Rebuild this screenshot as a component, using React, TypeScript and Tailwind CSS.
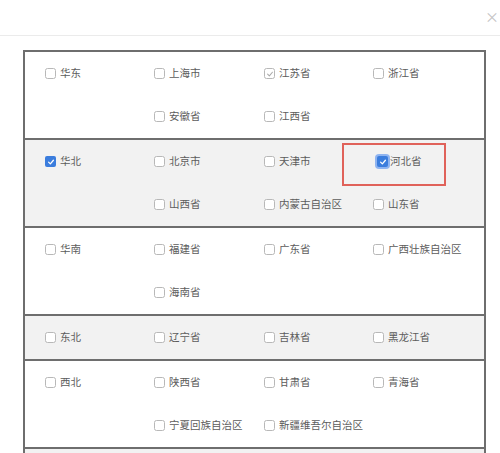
type Mark = "none" | "dim" | "blue" | "focus";

type Item = { label: string; mark?: Mark };

type Row = { region: string; regionMark?: Mark; items: Item[]; gray: boolean };

const rows: Row[] = [
  {
    region: "华东",
    gray: false,
    items: [
      { label: "上海市" },
      { label: "江苏省", mark: "dim" },
      { label: "浙江省" },
      { label: "安徽省" },
      { label: "江西省" },
    ],
  },
  {
    region: "华北",
    regionMark: "blue",
    gray: true,
    items: [
      { label: "北京市" },
      { label: "天津市" },
      { label: "河北省", mark: "focus" },
      { label: "山西省" },
      { label: "内蒙古自治区" },
      { label: "山东省" },
    ],
  },
  {
    region: "华南",
    gray: false,
    items: [
      { label: "福建省" },
      { label: "广东省" },
      { label: "广西壮族自治区" },
      { label: "海南省" },
    ],
  },
  {
    region: "东北",
    gray: true,
    items: [{ label: "辽宁省" }, { label: "吉林省" }, { label: "黑龙江省" }],
  },
  {
    region: "西北",
    gray: false,
    items: [
      { label: "陕西省" },
      { label: "甘肃省" },
      { label: "青海省" },
      { label: "宁夏回族自治区" },
      { label: "新疆维吾尔自治区" },
    ],
  },
];

function Box({ mark = "none" }: { mark?: Mark }) {
  if (mark === "blue" || mark === "focus") {
    return (
      <span
        className={
          "flex h-[11px] w-[11px] shrink-0 items-center justify-center rounded-[2px] bg-[#3b7ddd] " +
          (mark === "focus" ? "ring-2 ring-[#8fb4f0]" : "")
        }
      >
        <svg viewBox="0 0 10 10" className="h-[8px] w-[8px]">
          <path d="M2 5.2 4.2 7.3 8 2.8" fill="none" stroke="#fff" strokeWidth="1.6" strokeLinecap="round" strokeLinejoin="round" />
        </svg>
      </span>
    );
  }
  return (
    <span className="flex h-[11px] w-[11px] shrink-0 items-center justify-center rounded-[2.5px] border border-[#b8b8b8] bg-white">
      {mark === "dim" && (
        <svg viewBox="0 0 10 10" className="h-[8px] w-[8px]">
          <path d="M2 5.2 4.2 7.3 8 2.8" fill="none" stroke="#a8a8a8" strokeWidth="1.3" strokeLinecap="round" strokeLinejoin="round" />
        </svg>
      )}
    </span>
  );
}

function Check({ label, mark }: Item) {
  const tight = mark === "focus";
  return (
    <div className={"flex h-[43px] items-center " + (tight ? "gap-[2px] pl-[4px]" : "gap-[4px]")}>
      <Box mark={mark} />
      <span className="text-[10.5px] leading-none text-[#5c5c5c]">{label}</span>
    </div>
  );
}

export default function App() {
  return (
    <div
      className="relative h-[453px] w-[500px] overflow-hidden bg-white"
      style={{ fontFamily: '"Noto Sans CJK SC", "Noto Sans", sans-serif' }}
    >
      <div className="flex h-[36px] items-center justify-end border-b border-[#ebebeb] pr-[1px]">
        <span className="mb-[4px] text-[14px] leading-none text-[#c4c4c4]">×</span>
      </div>
      <div className="relative ml-[23px] mt-[14px] w-[463px] border-x-2 border-[#6e6e6e]">
        {rows.map((r) => (
          <div
            key={r.region}
            className={
              "grid grid-cols-[109px_327px] border-t-2 border-[#6e6e6e] pl-[20px] " +
              (r.gray ? "bg-[#f2f2f2]" : "bg-white")
            }
          >
            <Check label={r.region} mark={r.regionMark} />
            <div className="grid grid-cols-[110px_109px_108px]">
              {r.items.map((it) => (
                <Check key={it.label} {...it} />
              ))}
            </div>
          </div>
        ))}
        <div className="h-[43px] border-t-2 border-[#6e6e6e] bg-[#f2f2f2]" />
        <div className="pointer-events-none absolute left-[317px] top-[93px] h-[43px] w-[104px] border-2 border-[#e0625a]" />
      </div>
    </div>
  );
}
